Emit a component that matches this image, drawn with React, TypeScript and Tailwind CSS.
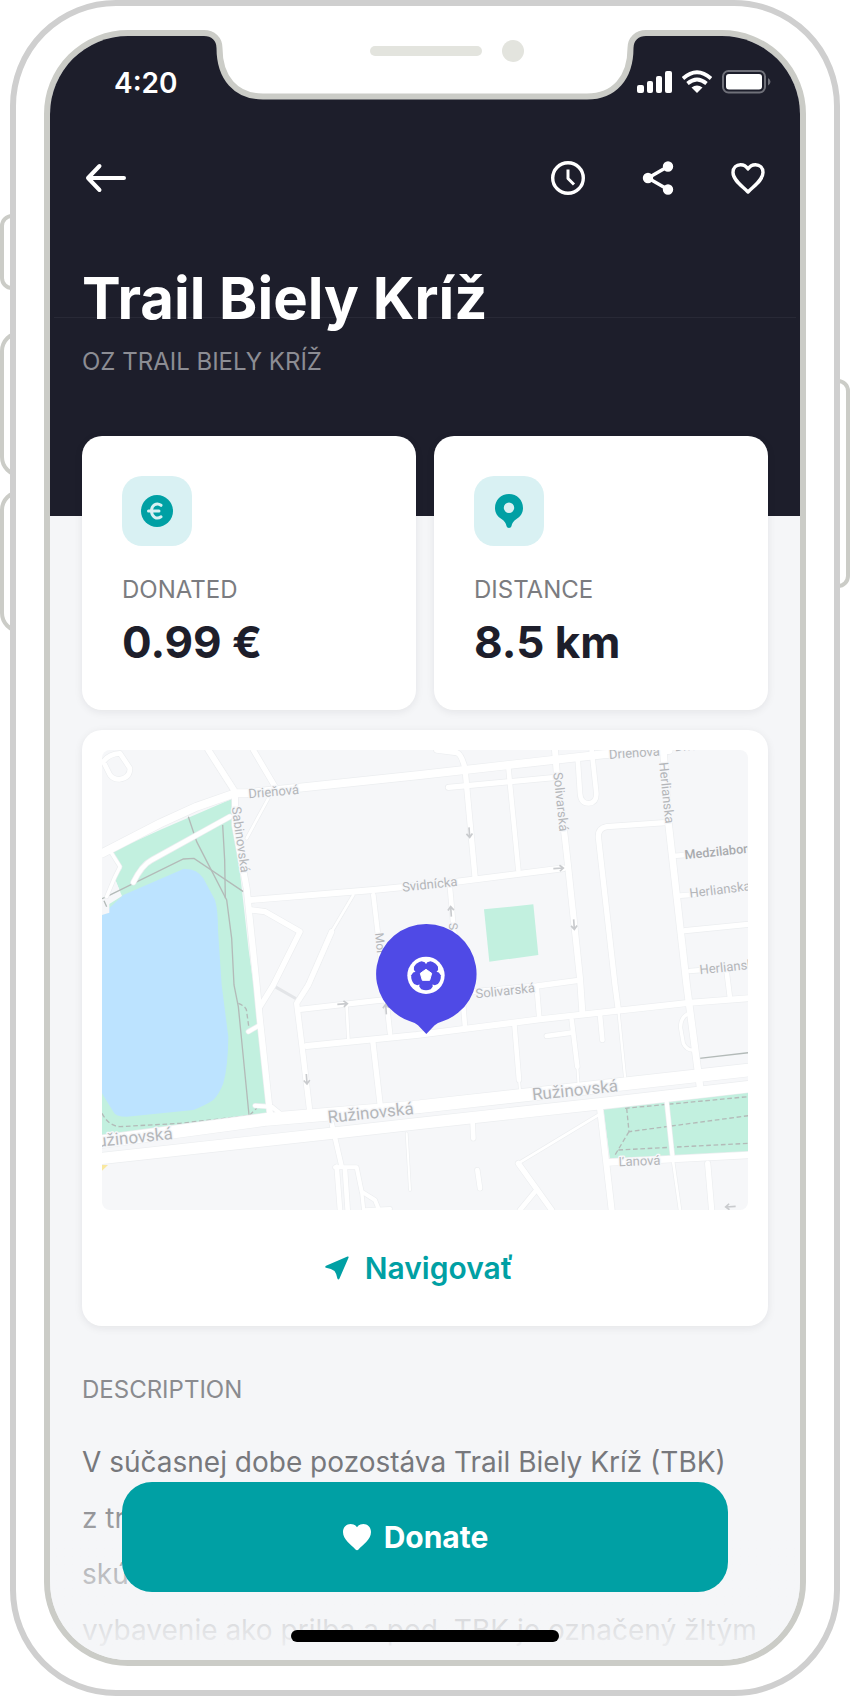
import type { ReactNode } from "react";

type Road = [d: string, width: number];

const roads: Road[] = [
  ["M0 310 L174 220 L284 170 L399 130 L434 130 L954 75 L1504 13 L1700 0", 24],
  ["M54 10 L84 55 Q84 84 52 88 Q34 88 24 75 L4 35 Q20 12 54 10 Z", 14],
  ["M319 0 L399 125", 18],
  ["M454 0 L519 110", 16],
  ["M499 145 L434 265", 8],
  ["M399 130 L399 225 L434 415 L464 705 L474 810 L504 1090", 18],
  ["M384 200 L149 330 Q120 345 94 397", 14],
  ["M29 310 L54 350 L39 380 L14 440", 10],
  ["M444 450 L814 420 L1064 395 L1384 355", 18],
  ["M449 480 L489 485 L594 545 L514 705 L474 770", 16],
  ["M754 435 L689 545", 8],
  ["M689 545 L619 705 L584 760 L599 880 L624 1090", 16],
  ["M814 435 L834 605 L854 760 L864 850", 14],
  ["M594 778 L824 752 L1304 708 L1424 692", 16],
  ["M614 888 L944 855 L1314 808 L1764 758 L1939 745", 18],
  ["M734 770 L739 865", 8],
  ["M812 870 L834 1060", 16],
  ["M1004 0 L1064 8 Q1078 12 1089 55 L1119 380", 16],
  ["M1039 112 L1354 83", 16],
  ["M1219 50 L1249 360", 14],
  ["M1359 0 L1364 65 L1389 265 L1399 355 L1434 685 L1441 785", 18],
  ["M1427 25 L1434 130 Q1436 160 1460 160 Q1484 158 1483 130 L1469 0", 14],
  ["M1684 0 L1699 215 L1754 705 L1794 1010", 20],
  ["M1689 218 L1514 230 Q1489 234 1489 260 L1539 705 L1549 780", 16],
  ["M1549 780 L1569 980", 7],
  ["M1714 318 L1760 314", 14],
  ["M1734 437 L1775 434", 14],
  ["M1749 542 L1939 523", 16],
  ["M1764 663 L1800 660", 14],
  ["M1874 665 L1884 745", 14],
  ["M1044 415 L1054 525 L1084 770 L1089 830", 14],
  ["M1304 710 L1312 805", 14],
  ["M1237 820 L1251 990", 14],
  ["M1251 990 L1255 1030", 6],
  ["M1409 810 L1426 950", 14],
  ["M1426 950 L1430 1010", 6],
  ["M1334 858 L1409 848", 14],
  ["M1494 795 L1501 870", 14],
  ["M1762 790 Q1734 800 1736 835 L1744 880 Q1754 902 1776 900", 10],
  ["M1519 1237 L1939 1215", 20],
  ["M1494 1075 L1529 1380", 18],
  ["M1694 1055 L1712 1225", 12],
  ["M1712 1225 L1734 1380", 8],
  ["M1817 1240 L1829 1380", 16],
  ["M1489 1095 L1249 1240", 8],
  ["M1249 1240 L1349 1380", 16],
  ["M1299 1325 L1254 1380", 14],
  ["M1112 1120 L1114 1165", 14],
  ["M1126 1260 L1134 1315", 14],
  ["M689 1120 L719 1250", 14],
  ["M704 1250 L714 1380", 14],
  ["M729 1260 L737 1380", 14],
  ["M699 1252 L764 1252 L779 1325 L819 1350 L829 1375", 12],
  ["M779 1325 L785 1380 L865 1376", 10],
  ["M914 1150 L924 1320", 6],
  ["M439 845 L474 825", 12],
  ["M459 1067 L509 1070 L534 1090", 12],
  ["M0 1175 L494 1108 L954 1070 L1939 960", 38],
  ["M0 1225 L734 1145 L954 1120 L1504 1060 L1939 1010", 34],
];

const footpaths = [
  "M259 200 L284 275 L374 450 L389 565 L396 705 L409 770 L441 1095",
  "M362 225 L368 330 L370 445",
  "M14 440 L244 327 L276 325 L424 425",
  "M1792 925 L1939 908",
];

const dashedPaths = [
  "M0 1090 Q20 1128 54 1130 L234 1120 L441 1097 L464 1075",
  "M409 760 Q434 770 434 785 L441 835",
  "M1569 1075 L1939 1040",
  "M1574 1075 L1581 1145 L1939 1097",
  "M1581 1145 L1539 1215",
  "M1549 1200 L1939 1180",
];

type StreetName = { name: string; x: number; y: number; angle: number; size: number; dark?: boolean };

const streetNames: StreetName[] = [
  { name: "Drieňová", x: 440, y: 145, angle: -5, size: 39 },
  { name: "Sabinovská", x: 389, y: 172, angle: 82, size: 39 },
  { name: "Svidnícka", x: 902, y: 425, angle: -6, size: 39 },
  { name: "Mor", x: 819, y: 550, angle: 84, size: 36 },
  { name: "S", x: 1040, y: 520, angle: 84, size: 36 },
  { name: "Solivarská", x: 1354, y: 68, angle: 84, size: 39 },
  { name: "Herlianska", x: 1671, y: 38, angle: 84, size: 39 },
  { name: "Drieňová", x: 1522, y: 27, angle: -4, size: 39 },
  { name: "Drieňová", x: 1719, y: 4, angle: -4, size: 38 },
  { name: "Medzilaborecká", x: 1749, y: 328, angle: -6, size: 38, dark: true },
  { name: "Herlianska", x: 1764, y: 443, angle: -7, size: 39 },
  { name: "Herlianska", x: 1794, y: 673, angle: -6, size: 39 },
  { name: "Solivarská", x: 1122, y: 745, angle: -6, size: 39 },
  { name: "Ružinovská", x: 679, y: 1119, angle: -6, size: 51 },
  { name: "Ružinovská", x: 1292, y: 1051, angle: -6, size: 51 },
  { name: "Ružinovská", x: -44, y: 1194, angle: -6, size: 51 },
  { name: "Ľanová", x: 1550, y: 1249, angle: -2, size: 39 },
];

const arrows = [
  [1102, 247, 86],
  [1369, 355, -4],
  [1047, 485, -94],
  [1416, 523, 86],
  [721, 762, -4],
  [614, 987, 86],
  [852, 778, -94],
  [1886, 1370, 176],
];

const ballPatches = [90, 18, -54, -126, 162];

function StreetMap() {
  return (
    <svg viewBox="0 0 1938 1380" className="block h-auto w-full rounded-lg" role="img" aria-label="Map">
      <rect width="1938" height="1380" fill="#f6f7f9" />
      <path d="M389 147 L174 240 L30 305 L60 355 L38 385 L55 425 L0 470 L0 1165 L509 1095 L440 600 Z" fill="#c2f0df" />
      <path d="M0 495 L64 435 L244 357 Q285 355 304 385 L339 450 Q348 480 348 540 L359 705 L379 860 Q378 950 364 1000 Q352 1032 334 1050 Q310 1066 274 1080 L74 1100 Q40 1100 34 1085 L0 1030 Z" fill="#bce3ff" />
      <path d="M0 310 L28 312 L56 350 L38 385 L52 420 L60 438 L22 462 L22 488 L0 495 Z" fill="#f6f7f9" />
      <path d="M1146 478 L1294 463 L1309 615 L1162 635 Z" fill="#c2f0df" />
      <path d="M1504 1075 L1939 1025 L1939 1212 L1524 1228 Z" fill="#c2f0df" />
      <path d="M519 710 L589 750" stroke="#e3e5e8" strokeWidth="9" />
      <g fill="none" stroke="#b3bab8" strokeWidth="4">
        {footpaths.map((d) => (
          <path key={d} d={d} />
        ))}
        {dashedPaths.map((d) => (
          <path key={d} d={d} strokeDasharray="14 8" />
        ))}
      </g>
      <path d="M0 446 L14 440 M6 452 L14 470" fill="none" stroke="#b3bab8" strokeWidth="4" />
      <g fill="none" stroke="#eceef0" strokeLinecap="round" strokeLinejoin="round">
        {roads.map(([d, width]) => (
          <path key={d} d={d} strokeWidth={width + 4} />
        ))}
      </g>
      <g fill="none" stroke="#ffffff" strokeLinecap="round" strokeLinejoin="round">
        {roads.map(([d, width]) => (
          <path key={d} d={d} strokeWidth={width} />
        ))}
      </g>
      <path d="M0 1245 H18 L0 1262 Z" fill="#f9e8a0" />
      <g fill="none" stroke="#c9cbce" strokeWidth="5">
        {arrows.map(([x, y, angle]) => (
          <path key={`${x}-${y}`} d="M-15 0 H14 M4 -9 L15 0 L4 9" transform={`translate(${x} ${y}) rotate(${angle})`} />
        ))}
      </g>
      <g fontFamily="Roboto, sans-serif" stroke="#f6f7f9" strokeWidth="8" strokeLinejoin="round" paintOrder="stroke">
        {streetNames.map(({ name, x, y, angle, size, dark }) => (
          <text key={`${name}-${x}`} transform={`translate(${x} ${y}) rotate(${angle})`} fontSize={size} fill={dark ? "#a9abae" : "#b4b6b9"} fontWeight={dark ? 500 : 400}>
            {name}
          </text>
        ))}
      </g>
      <path d="M973 522 A150 150 0 0 1 1022 814 Q1006 818 998 826 L973 852 L948 826 Q940 818 924 814 A150 150 0 0 1 973 522 Z" fill="#4f4ae6" />
      <g transform="translate(972 676)">
        <circle r="56" fill="#ffffff" />
        <circle r="30" fill="#4f4ae6" />
        {ballPatches.map((angle) => (
          <path key={angle} transform={`rotate(${angle})`} d="M10 -19 L34 -20 L42 -14 Q48 0 42 14 L34 20 L10 19 Z" fill="#4f4ae6" />
        ))}
        <path d="M0 -18 L17 -6 L11 15 L-11 15 L-17 -6 Z" fill="#ffffff" stroke="#ffffff" strokeWidth="3" strokeLinejoin="round" />
      </g>
    </svg>
  );
}

function StatusIcons() {
  return (
    <svg width="136" height="26" viewBox="0 0 136 26" aria-hidden="true">
      <g fill="#ffffff">
        <rect x="1" y="15" width="7" height="8" rx="2" />
        <rect x="11" y="11" width="6" height="12" rx="2" />
        <rect x="20" y="6" width="6" height="17" rx="2" />
        <rect x="29" y="1" width="7" height="22" rx="2" />
        <path d="M61 23 L55.5 17.5 Q61 13.5 66.500 17.5 Z" />
      </g>
      <g fill="none" stroke="#ffffff" strokeWidth="3.700">
        <path d="M47 8.500 Q61 -4 75 8.500" />
        <path d="M51.500 13.500 Q61 5.500 70.500 13.500" />
      </g>
      <rect x="87" y="1" width="42" height="21.500" rx="5.500" fill="none" stroke="#6f7079" strokeWidth="2" />
      <rect x="90" y="4" width="36" height="15.500" rx="3" fill="#ffffff" />
      <path d="M132 8 Q137 11.700 132 15.500 Z" fill="#6f7079" />
    </svg>
  );
}

function IconButton({ label, children }: { label: string; children: ReactNode }) {
  return (
    <button type="button" aria-label={label} className="size-10">
      <svg viewBox="0 0 40 40" className="size-10" fill="none" stroke="#ffffff" strokeWidth="3.4" strokeLinecap="round" strokeLinejoin="round">
        {children}
      </svg>
    </button>
  );
}

function Stat({ label, value, icon }: { label: string; value: string; icon: ReactNode }) {
  return (
    <section className="flex flex-col items-start rounded-[20px] bg-white p-10 shadow-[0_2px_8px_rgba(29,30,43,0.08)]">
      <div className="flex size-[70px] items-center justify-center rounded-[20px] bg-[#d9f1f3]">{icon}</div>
      <h2 className="mt-7 text-2xl leading-8 text-[#7b7c80]">{label}</h2>
      <p className="mt-2 text-[44px] leading-14 font-bold text-[#1d1e2b]">{value}</p>
    </section>
  );
}

function Notch() {
  return (
    <svg className="absolute -top-[8px] left-1/2 -translate-x-1/2" width="450" height="78" viewBox="200 22 450 78" aria-hidden="true">
      <path d="M204 22 V33 C213 33 219.500 39 219.500 48 C219.500 78 236 96.500 263 96.500 H587 C614 96.500 630.500 78 630.500 48 C630.500 39 637 33 646 33 V22 Z" fill="#ffffff" />
      <path d="M204 33 C213 33 219.500 39 219.500 48 C219.500 78 236 96.500 263 96.500 H587 C614 96.500 630.500 78 630.500 48 C630.500 39 637 33 646 33" fill="none" stroke="#cbccc7" strokeWidth="6" />
      <rect x="370" y="46" width="112" height="10" rx="5" fill="#e3e4de" />
      <circle cx="513" cy="51" r="11" fill="#e3e4de" />
    </svg>
  );
}

export default function App() {
  return (
    <div className="relative overflow-hidden bg-white px-[10px] font-[Inter,sans-serif]">
      <div className="absolute top-[214px] left-0 h-[76px] w-5 rounded-l-[12px] border-4 border-[#cbccc7]" />
      <div className="absolute top-[331px] left-0 h-[146px] w-8 rounded-l-[20px] border-4 border-[#cbccc7]" />
      <div className="absolute top-[490px] left-0 h-[143px] w-8 rounded-l-[20px] border-4 border-[#cbccc7]" />
      <div className="absolute top-[379px] right-0 h-[209px] w-5 rounded-r-[12px] border-4 border-[#cbccc7]" />

      <div className="relative rounded-[106px] border-[6px] border-[#cfcfcf] bg-white px-7 py-6">
        <div className="relative">
          <main className="relative overflow-hidden rounded-[84px] border-[6px] border-[#cbccc7] bg-[#f5f6f8]">
            <header className="relative bg-[#1d1e2b] px-8 pb-[138px] text-white">
              <div className="absolute inset-x-1 top-[281px] h-px bg-white/5" />
              <div className="-mr-1 flex h-[94px] items-center justify-between pl-8">
                <time className="text-[28px] leading-8 font-semibold">4:20</time>
                <StatusIcons />
              </div>
              <nav className="flex h-24 items-center justify-between">
                <button type="button" aria-label="Back" className="h-10 w-12">
                  <svg viewBox="0 0 48 40" className="h-10 w-12" fill="none" stroke="#ffffff" strokeWidth="4" strokeLinecap="round" strokeLinejoin="round">
                    <path d="M42 20 H6 M17.500 8 L6 20 L17.500 32" />
                  </svg>
                </button>
                <div className="flex gap-[50px]">
                  <IconButton label="History">
                    <circle cx="20" cy="20" r="15.300" />
                    <path d="M20 11.500 V20.500 L26 26.500" strokeWidth="3" strokeLinecap="butt" />
                  </IconButton>
                  <IconButton label="Share">
                    <path d="M30 8.500 L10 20 L30 31.500" />
                    <circle cx="30" cy="8.500" r="3.500" fill="#ffffff" />
                    <circle cx="10" cy="20" r="3.500" fill="#ffffff" />
                    <circle cx="30" cy="31.500" r="3.500" fill="#ffffff" />
                  </IconButton>
                  <IconButton label="Add to favourites">
                    <path d="M20 34 C15 28.500 5 22.500 5 14.500 C5 9.500 8.500 6.700 12.500 6.700 C16 6.700 18.500 8.500 20 11 C21.500 8.500 24 6.700 27.500 6.700 C31.500 6.700 35 9.500 35 14.500 C35 22.500 25 28.500 20 34 Z" />
                  </IconButton>
                </div>
              </nav>
              <h1 className="mt-9 text-[58px] leading-[72px] font-bold">Trail Biely Kríž</h1>
              <p className="mt-3 text-2xl leading-8 text-[#8c8d94]">OZ TRAIL BIELY KRÍŽ</p>
            </header>

            <div className="relative -mt-20 px-8">
              <div className="grid grid-cols-2 gap-[18px]">
                <Stat
                  label="DONATED"
                  value="0.99 €"
                  icon={
                    <svg width="34" height="34" viewBox="0 0 34 34" aria-hidden="true">
                      <circle cx="17" cy="17" r="16" fill="#00a0a4" />
                      <path d="M21 11.300 C16.500 8 11.500 11.500 11.500 17 C11.500 22.500 16.500 26 21 22.800 M8.500 17 H19" fill="none" stroke="#d9f1f3" strokeWidth="3" strokeLinecap="round" />
                    </svg>
                  }
                />
                <Stat
                  label="DISTANCE"
                  value="8.5 km"
                  icon={
                    <svg width="34" height="34" viewBox="0 0 34 34" aria-hidden="true">
                      <path fillRule="evenodd" d="M17 0 C25 0 31 6 31 14 C31 19 28.500 22.500 24.500 25 C21.500 27 20 29 19.500 32 C19 34.500 15 34.500 14.500 32 C14 29 12.500 27 9.500 25 C5.500 22.500 3 19 3 14 C3 6 9 0 17 0 Z M17 8.500 A5.200 5.200 0 1 0 17 18.900 A5.200 5.200 0 1 0 17 8.500 Z" fill="#00a0a4" />
                    </svg>
                  }
                />
              </div>

              <section className="mt-5 rounded-[20px] bg-white px-5 pt-5 shadow-[0_2px_8px_rgba(29,30,43,0.08)]">
                <StreetMap />
                <button type="button" className="flex h-[116px] w-full items-center justify-center gap-4 pr-3 text-[30px] leading-9 font-semibold text-[#00a0a4]">
                  <svg width="24" height="24" viewBox="0 0 24 24" aria-hidden="true">
                    <path d="M22.500 0.500 Q24 0 23.500 1.700 L14.500 22.500 Q13.300 24.500 12.400 22.500 Q11.500 17.500 9.500 15 Q6.500 12.500 1 11.700 Q-0.500 11 1 9.800 Z" fill="#00a0a4" />
                  </svg>
                  Navigovať
                </button>
              </section>

              <h2 className="mt-12 text-2xl leading-8 text-[#8a8b8f]">DESCRIPTION</h2>
              <p className="mt-7 text-[28px] leading-14 whitespace-nowrap text-[#77787c]">
                V súčasnej dobe pozostáva Trail Biely Kríž (TBK)
                <br />
                z trailov
                <br />
                skúsenosti
                <br />
                vybavenie ako prilba a pod. TBK je označený žltým
              </p>
              <div className="h-0.5" />
            </div>

            <div className="pointer-events-none absolute inset-x-0 bottom-0 h-[190px] bg-linear-to-b from-[#f5f6f8]/0 to-[#f5f6f8]" />
            <button type="button" className="absolute inset-x-[72px] bottom-[68px] flex h-[110px] items-center justify-center gap-3 rounded-[30px] bg-[#00a0a4] pr-5 text-[30px] leading-9 font-bold text-white">
              <svg width="30" height="28" viewBox="0 0 30 28" aria-hidden="true">
                <path d="M13.500 26.500 C9 21.500 1 16.500 1 9 C1 4 4.500 1 8.500 1 C11.500 1 13.500 2.200 15 4.200 C16.500 2.200 18.500 1 21.500 1 C25.500 1 29 4 29 9 C29 16.500 21 21.500 16.500 26.500 Q15 28 13.500 26.500 Z" fill="#ffffff" />
              </svg>
              Donate
            </button>
            <div className="absolute bottom-[18px] left-1/2 h-3 w-[268px] -translate-x-1/2 rounded-full bg-black" />
          </main>
          <Notch />
        </div>
      </div>
    </div>
  );
}
